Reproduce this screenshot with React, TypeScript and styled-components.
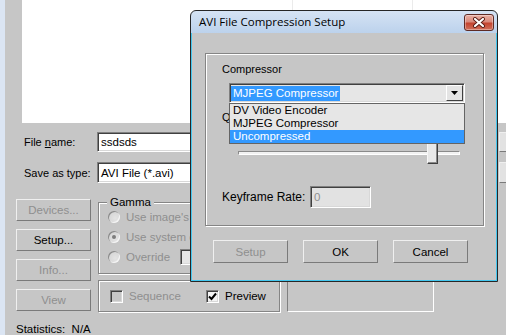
import React from "react";
import styled, { createGlobalStyle, css } from "styled-components";

const FACE = "#c6c6c6";
const DISABLED = "#8f8f8f";

const GlobalStyle = createGlobalStyle`
  html, body { margin: 0; padding: 0; background: ${FACE}; }
  body {
    font-family: "Liberation Sans", Arial, sans-serif;
    font-size: 11px;
    color: #000;
  }
  *, *::before, *::after { box-sizing: border-box; }
`;

const sunken = css`
  border: 1px solid;
  border-color: #808080 #ffffff #ffffff #808080;
  box-shadow: inset 1px 1px 0 #404040, inset -1px -1px 0 #d8d8d8;
`;

const raised = css`
  border: 1px solid;
  border-color: #efefef #7a7a7a #7a7a7a #efefef;
`;

const etched = css`
  border: 1px solid #858585;
  box-shadow: inset 1px 1px 0 #ffffff, 1px 1px 0 #ffffff;
`;

/* ---------- parent "save" dialog ---------- */

const Screen = styled.div`
  position: relative;
  width: 506px;
  height: 335px;
  overflow: hidden;
  background: ${FACE};
  border-left: 5px solid #dbe5f3;
  display: flex;
  flex-direction: column;
  & > * { flex: none; }
`;

const FileList = styled.div`
  margin-left: 17px;
  width: 560px;
  height: 123px;
  background: #ffffff;
  display: grid;
  grid-template-columns: 271px 120px 1fr;
`;

const ListColumn = styled.div`
  border-right: 1px solid #ebebeb;
`;

const FieldRow = styled.div<{ $top: number; $height: number }>`
  display: flex;
  align-items: center;
  margin-top: ${(p) => p.$top}px;
  height: ${(p) => p.$height}px;
  padding-left: 19px;
  & > * { flex: none; }
`;

const FieldLabel = styled.span`
  width: 73px;
  white-space: nowrap;
`;

const TextField = styled.div`
  ${sunken};
  width: 394px;
  height: 100%;
  background: #ffffff;
  padding-left: 3px;
  display: flex;
  align-items: center;
  white-space: nowrap;
  font-size: 11.5px;
`;

const SideButton = styled.div`
  ${raised};
  margin-left: 8px;
  width: 75px;
  height: 100%;
  background: #e2e2e2;
`;

const Lower = styled.div`
  display: flex;
  gap: 7px;
  margin-top: 16px;
  padding-left: 11px;
  & > * { flex: none; }
`;

const ButtonColumn = styled.div`
  display: flex;
  flex-direction: column;
  gap: 8px;
  width: 75px;
`;

const PushButton = styled.button<{ $disabled?: boolean }>`
  ${raised};
  flex: none;
  width: 75px;
  height: 22px;
  padding: 0;
  background: ${FACE};
  font-family: "Liberation Sans", Arial, sans-serif;
  font-size: 11.5px;
  color: ${(p) => (p.$disabled ? DISABLED : "#000")};
  cursor: default;
`;

const OptionsColumn = styled.div`
  display: flex;
  flex-direction: column;
  gap: 6px;
  padding-top: 3px;
`;

const GroupBox = styled.div<{ $width: number; $height: number }>`
  ${etched};
  position: relative;
  flex: none;
  width: ${(p) => p.$width}px;
  height: ${(p) => p.$height}px;
`;

const Legend = styled.span`
  position: absolute;
  top: -8px;
  left: 8px;
  padding: 0 3px;
  background: ${FACE};
  font-size: 11.5px;
  line-height: 14px;
`;

const RadioList = styled.div`
  display: flex;
  flex-direction: column;
  gap: 2px;
  padding: 5px 0 0 9px;
`;

const RadioRow = styled.div`
  display: flex;
  align-items: center;
  height: 18px;
  gap: 6px;
  color: ${DISABLED};
  font-size: 11.5px;
  white-space: nowrap;
  & > * { flex: none; }
`;

const Radio = styled.span<{ $checked?: boolean }>`
  position: relative;
  width: 12px;
  height: 12px;
  border-radius: 50%;
  background: radial-gradient(circle at 60% 60%, #e4e4e4, #cfcfcf);
  box-shadow: inset 1px 1px 0 #8a8a8a, inset -1px -1px 0 #f4f4f4;
  &::after {
    content: "";
    display: ${(p) => (p.$checked ? "block" : "none")};
    position: absolute;
    left: 4px;
    top: 4px;
    width: 4px;
    height: 4px;
    border-radius: 50%;
    background: #7d7d7d;
  }
`;

const OverrideText = styled.span`
  width: 48px;
`;

const SmallField = styled.div`
  ${sunken};
  width: 60px;
  height: 16px;
  background: #e6e6e6;
`;

const BottomRow = styled.div`
  display: flex;
  gap: 7px;
`;

const CheckGroup = styled(GroupBox)`
  display: flex;
  align-items: center;
  padding-left: 11px;
`;

const CheckItem = styled.label<{ $width?: number; $disabled?: boolean }>`
  display: flex;
  align-items: center;
  gap: 6px;
  flex: none;
  width: ${(p) => (p.$width ? `${p.$width}px` : "auto")};
  color: ${(p) => (p.$disabled ? DISABLED : "#000")};
  font-size: 11.5px;
`;

const CheckBox = styled.span<{ $disabled?: boolean }>`
  ${sunken};
  width: 13px;
  height: 13px;
  background: ${(p) => (p.$disabled ? FACE : "#f4f4f4")};
  display: flex;
  align-items: center;
  justify-content: center;
`;

const SunkenPanel = styled.div`
  width: 147px;
  height: 32px;
  border: 1px solid;
  border-color: #808080 #ffffff #ffffff #808080;
`;

const Stats = styled.div`
  margin-top: 11px;
  padding-left: 11px;
  white-space: pre;
  font-size: 11.5px;
  line-height: 12px;
`;

/* ---------- AVI compression dialog (window over the parent) ---------- */

const Window = styled.div`
  position: absolute;
  left: 185px;
  top: 10px;
  width: 308px;
  height: 272px;
  display: flex;
  flex-direction: column;
  border: 1px solid #262626;
  border-radius: 6px 6px 0 0;
  background: linear-gradient(#d5e3f4, #bcd2ec 22px);
  overflow: hidden;
`;

const TitleBar = styled.div`
  flex: none;
  height: 22px;
  display: flex;
  align-items: flex-start;
  padding: 0 3px 0 8px;
`;

const Title = styled.span`
  margin-top: 3px;
  font-family: "Open Sans", "Noto Sans", sans-serif;
  font-size: 11.5px;
  line-height: 16px;
  color: #000;
  white-space: nowrap;
`;

const CloseButton = styled.div`
  margin: 3px 0 0 auto;
  width: 30px;
  height: 17px;
  border: 1px solid #5e2a24;
  border-radius: 3px;
  background: linear-gradient(#eab0a4 0%, #d98a7c 45%, #c4442f 55%, #d0705c 100%);
  box-shadow: inset 0 0 0 1px rgba(255, 255, 255, 0.35);
  display: flex;
  align-items: center;
  justify-content: center;
`;

const Client = styled.div`
  flex: 1;
  background: ${FACE};
  border: 1px solid #43c6ee;
  border-top: none;
  display: flex;
  flex-direction: column;
`;

const DialogGroup = styled.div`
  ${etched};
  margin: 20px 0 0 13px;
  width: 279px;
  height: 173px;
  padding: 8px 0 0 16px;
  display: flex;
  flex-direction: column;
  align-items: flex-start;
`;

const Label = styled.span<{ $top?: number }>`
  margin-top: ${(p) => p.$top ?? 0}px;
  line-height: 14px;
  font-size: 11px;
  white-space: nowrap;
`;

const Combo = styled.div`
  position: relative;
  margin: 7px 0 0 7px;
  width: 236px;
  height: 20px;
`;

const ComboField = styled.div`
  ${sunken};
  height: 100%;
  background: #e6e6e6;
  display: flex;
  align-items: center;
  padding: 0 1px;
`;

const Selection = styled.span`
  background: #3399ff;
  color: #ffffff;
  padding: 0 2px;
  line-height: 15px;
  font-size: 11.5px;
  white-space: nowrap;
`;

const DropButton = styled.span`
  ${raised};
  margin-left: auto;
  width: 17px;
  height: 16px;
  background: #e4e4e4;
  border-color: #ffffff #404040 #404040 #ffffff;
  display: flex;
  align-items: center;
  justify-content: center;
`;

const DropList = styled.ul`
  position: absolute;
  z-index: 2;
  left: 0;
  top: 20px;
  width: 236px;
  margin: 0;
  padding: 0;
  list-style: none;
  border: 1px solid #646464;
  background: #e6e6e6;
`;

const DropItem = styled.li<{ $selected?: boolean }>`
  height: 13px;
  line-height: 13px;
  padding-left: 3px;
  font-size: 11.5px;
  white-space: nowrap;
  background: ${(p) => (p.$selected ? "#3399ff" : "transparent")};
  color: ${(p) => (p.$selected ? "#ffffff" : "#000")};
`;

const Slider = styled.div`
  position: relative;
  margin: 19px 0 0 16px;
  width: 222px;
  height: 21px;
`;

const Track = styled.div`
  margin-top: 8px;
  height: 4px;
  border: 1px solid;
  border-color: #8a8a8a #ffffff #ffffff #8a8a8a;
  background: #f2f2f2;
`;

const Thumb = styled.div<{ $pos: number }>`
  position: absolute;
  top: 0;
  left: ${(p) => p.$pos}px;
  width: 11px;
  height: 21px;
  background: #e8e8e8;
  border: 1px solid;
  border-color: #f6f6f6 #404040 #404040 #f6f6f6;
  box-shadow: inset -1px -1px 0 #8a8a8a;
`;

const KeyRow = styled.div`
  display: flex;
  align-items: center;
  margin-top: 22px;
  height: 22px;
`;

const KeyLabel = styled.span`
  width: 88px;
  font-size: 12px;
  white-space: nowrap;
`;

const KeyInput = styled.div`
  ${sunken};
  width: 61px;
  height: 22px;
  background: #e2e2e2;
  color: ${DISABLED};
  padding-left: 3px;
  display: flex;
  align-items: center;
  font-size: 11.5px;
`;

const DialogButtons = styled.div`
  display: flex;
  gap: 15px;
  margin: 14px 0 0 21px;
  & > ${PushButton} { height: 23px; }
`;

const CloseGlyph = () => (
  <svg width="14" height="11" viewBox="0 0 14 11">
    <path d="M3 2 L11 9 M11 2 L3 9" stroke="#5a1d16" strokeWidth="4" strokeLinecap="round" />
    <path d="M3 2 L11 9 M11 2 L3 9" stroke="#ffffff" strokeWidth="2.2" strokeLinecap="round" />
  </svg>
);

const ArrowGlyph = () => (
  <svg width="7" height="4" viewBox="0 0 7 4">
    <path d="M0 0 H7 L3.5 4 Z" fill="#000" />
  </svg>
);

const CheckGlyph = () => (
  <svg width="9" height="9" viewBox="0 0 9 9">
    <path d="M1 4.5 L3.5 7 L8 1.5" fill="none" stroke="#000" strokeWidth="2" />
  </svg>
);

const compressors = ["DV Video Encoder", "MJPEG Compressor", "Uncompressed"];

function CompressionDialog() {
  const quality = 0.895;
  const sliderWidth = 222 - 11;
  return (
    <Window>
      <TitleBar>
        <Title>AVI File Compression Setup</Title>
        <CloseButton>
          <CloseGlyph />
        </CloseButton>
      </TitleBar>
      <Client>
        <DialogGroup>
          <Label>Compressor</Label>
          <Combo>
            <ComboField>
              <Selection>MJPEG Compressor</Selection>
              <DropButton>
                <ArrowGlyph />
              </DropButton>
            </ComboField>
            <DropList>
              {compressors.map((c) => (
                <DropItem key={c} $selected={c === "Uncompressed"}>
                  {c}
                </DropItem>
              ))}
            </DropList>
          </Combo>
          <Label $top={7}>Quality</Label>
          <Slider>
            <Track />
            <Thumb $pos={Math.round(quality * sliderWidth)} />
          </Slider>
          <KeyRow>
            <KeyLabel>Keyframe Rate:</KeyLabel>
            <KeyInput>0</KeyInput>
          </KeyRow>
        </DialogGroup>
        <DialogButtons>
          <PushButton $disabled>Setup</PushButton>
          <PushButton>OK</PushButton>
          <PushButton>Cancel</PushButton>
        </DialogButtons>
      </Client>
    </Window>
  );
}

export default function App() {
  return (
    <>
      <GlobalStyle />
      <Screen>
        <FileList>
          <ListColumn />
          <ListColumn />
          <div />
        </FileList>
        <FieldRow $top={9} $height={20}>
          <FieldLabel>
            File <u>n</u>ame:
          </FieldLabel>
          <TextField>ssdsds</TextField>
          <SideButton />
        </FieldRow>
        <FieldRow $top={10} $height={21}>
          <FieldLabel>Save as type:</FieldLabel>
          <TextField>AVI File (*.avi)</TextField>
          <SideButton />
        </FieldRow>
        <Lower>
          <ButtonColumn>
            <PushButton $disabled>Devices...</PushButton>
            <PushButton>Setup...</PushButton>
            <PushButton $disabled>Info...</PushButton>
            <PushButton $disabled>View</PushButton>
          </ButtonColumn>
          <OptionsColumn>
            <GroupBox $width={335} $height={72}>
              <Legend>Gamma</Legend>
              <RadioList>
                <RadioRow>
                  <Radio />
                  Use image's own gamma
                </RadioRow>
                <RadioRow>
                  <Radio $checked />
                  Use system default gamma
                </RadioRow>
                <RadioRow>
                  <Radio />
                  <OverrideText>Override</OverrideText>
                  <SmallField />
                </RadioRow>
              </RadioList>
            </GroupBox>
            <BottomRow>
              <CheckGroup $width={182} $height={32}>
                <CheckItem $width={96} $disabled>
                  <CheckBox $disabled />
                  Sequence
                </CheckItem>
                <CheckItem>
                  <CheckBox>
                    <CheckGlyph />
                  </CheckBox>
                  Preview
                </CheckItem>
              </CheckGroup>
              <SunkenPanel />
            </BottomRow>
          </OptionsColumn>
        </Lower>
        <Stats>Statistics:  N/A</Stats>
        <CompressionDialog />
      </Screen>
    </>
  );
}
